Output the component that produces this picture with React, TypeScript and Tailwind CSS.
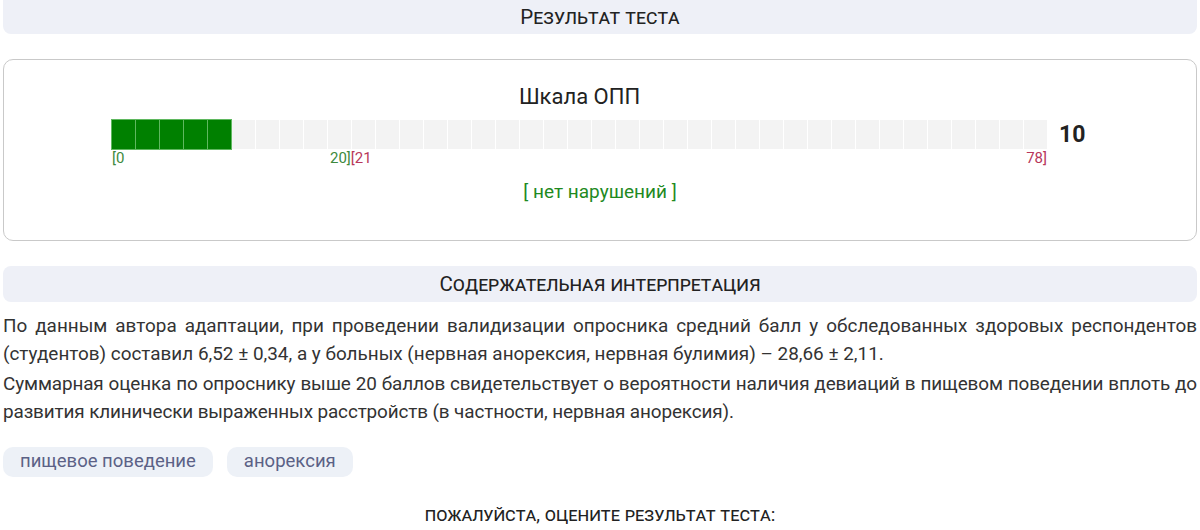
import React from "react";

const CELLS = 39;
const FILLED = 5;

function SectionHeader({ title, className = "" }: { title: string; className?: string }) {
  return (
    <div
      className={`mx-[3px] flex items-center justify-center rounded-[8px] bg-[#eef0f7] text-[20.5px] text-[#222] [font-variant:small-caps] ${className}`}
    >
      {title}
    </div>
  );
}

function ScaleBar() {
  return (
    <div className="flex gap-px">
      {Array.from({ length: CELLS }).map((_, i) => (
        <div
          key={i}
          className={
            i < FILLED
              ? "h-[29px] w-[23px] bg-[#008000] outline outline-1 outline-[#5fb85f]"
              : "h-[29px] w-[23px] bg-[#f3f3f3]"
          }
        />
      ))}
    </div>
  );
}

export default function App() {
  return (
    <div className="w-[1200px] bg-white pb-8 font-['Roboto',sans-serif] text-[#333]">
      <SectionHeader title="Результат теста" className="h-[34px] rounded-t-none" />

      <div className="mx-[3px] mt-[25px] rounded-[10px] border border-[#c9c9c9] pb-[36px] pt-[23px]">
        <div className="flex pl-[108px]">
          <div className="flex flex-col">
            <div className="w-[935px] text-center text-[22px] leading-[28px] text-[#222]">Шкала ОПП</div>
            <div className="mt-[9px] flex items-center">
              <ScaleBar />
              <span className="ml-[12px] text-[23px] font-bold leading-[29px] text-[#222]">10</span>
            </div>
            <div className="relative mt-px h-[16px] w-[935px] text-[15px] leading-[16px]">
              <span className="absolute left-0 text-[#3d8a3d]">[0</span>
              <span className="absolute left-[218px]">
                <span className="text-[#3d8a3d]">20]</span>
                <span className="text-[#b8375a]">[21</span>
              </span>
              <span className="absolute right-0 text-[#b8375a]">78]</span>
            </div>
          </div>
        </div>
        <div className="mt-[14px] text-center text-[19px] leading-[24px] text-[#1f8a1f]">
          [ нет нарушений ]
        </div>
      </div>

      <SectionHeader title="Содержательная интерпретация" className="mt-[25px] h-[36px]" />

      <div className="mx-[3px] mt-[10px] text-[18.9px] leading-[28px] text-[#333]">
        <p className="mb-[2px] text-justify">
          По данным автора адаптации, при проведении валидизации опросника средний балл у
          обследованных здоровых респондентов (студентов) составил 6,52 ± 0,34, а у больных
          (нервная анорексия, нервная булимия) – 28,66 ± 2,11.
        </p>
        <p className="text-justify tracking-[-0.12px]">
          Суммарная оценка по опроснику выше 20 баллов свидетельствует о вероятности наличия
          девиаций в пищевом поведении вплоть до развития клинически выраженных расстройств (в
          частности, нервная анорексия).
        </p>
      </div>

      <div className="mx-[3px] mt-[21px] flex gap-[14px]">
        {["пищевое поведение", "анорексия"].map((tag) => (
          <span
            key={tag}
            className="flex h-[30px] items-center rounded-[10px] bg-[#edf1f7] px-[17px] text-[18.5px] text-[#5b6186]"
          >
            {tag}
          </span>
        ))}
      </div>

      <div className="mt-[26px] text-center text-[19px] leading-[24px] text-[#222] [font-variant:small-caps]">
        пожалуйста, оцените результат теста:
      </div>
    </div>
  );
}
